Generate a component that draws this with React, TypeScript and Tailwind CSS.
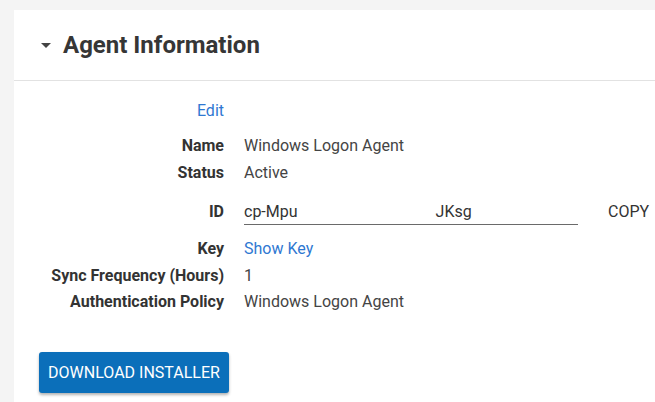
import React from "react";

const rows: { label: string; value: React.ReactNode }[] = [
  { label: "Name", value: "Windows Logon Agent" },
  { label: "Status", value: "Active" },
];

const rowsAfter: { label: string; value: React.ReactNode }[] = [
  {
    label: "Key",
    value: <span className="text-[#2f78d2] cursor-pointer">Show Key</span>,
  },
  { label: "Sync Frequency (Hours)", value: "1" },
  { label: "Authentication Policy", value: "Windows Logon Agent" },
];

export default function App() {
  return (
    <div
      className="h-[402px] overflow-hidden bg-[#f4f4f4] pl-[14px] pt-[10px]"
      style={{ fontFamily: "Roboto, 'Liberation Sans', sans-serif" }}
    >
      <div className="h-[400px] bg-white">
        {/* header */}
        <div className="flex h-[71px] items-center border-b border-[#e2e2e2] pl-[27px]">
          <svg width="10" height="5" viewBox="0 0 10 5" className="mt-[1px]">
            <path d="M0 0 L10 0 L5 5 Z" fill="#444" />
          </svg>
          <h2 className="ml-[12px] text-[24px] font-bold leading-none text-[#363636]">
            Agent Information
          </h2>
        </div>

        {/* details */}
        <div className="pt-[16px] text-[16px]">
          <div className="flex h-[27px] items-center">
            <div className="w-[210px] text-right text-[#2f78d2] cursor-pointer">
              Edit
            </div>
          </div>

          <div className="mt-[8px]">
            {rows.map((r) => (
              <div key={r.label} className="flex h-[27px] items-center">
                <div className="w-[210px] text-right font-bold text-[#333]">
                  {r.label}
                </div>
                <div className="ml-[20px] text-[#444]">{r.value}</div>
              </div>
            ))}
          </div>

          <div className="mt-[13px] flex h-[26px] items-start">
            <div className="w-[210px] text-right font-bold leading-[26px] text-[#333]">
              ID
            </div>
            <div className="ml-[20px] flex h-[26px] w-[334px] border-b-[1.5px] border-[#6a6a6a] leading-[25px] text-[#333]">
              <span>cp-Mpu</span>
              <span className="ml-[138px]">JKsg</span>
            </div>
            <button className="ml-[30px] leading-[26px] text-[#333] uppercase">
              Copy
            </button>
          </div>

          <div className="mt-[11px]">
            {rowsAfter.map((r) => (
              <div key={r.label} className="flex h-[26.5px] items-center">
                <div className="w-[210px] text-right font-bold text-[#333]">
                  {r.label}
                </div>
                <div className="ml-[20px] text-[#444]">{r.value}</div>
              </div>
            ))}
          </div>

          <button className="ml-[25px] mt-[36.5px] flex h-[41px] w-[190px] items-center justify-center rounded-[3px] bg-[#0b6fba] font-normal text-white uppercase shadow-[0_2px_3px_rgba(0,0,0,0.3)]">
            Download Installer
          </button>
        </div>
      </div>
    </div>
  );
}
